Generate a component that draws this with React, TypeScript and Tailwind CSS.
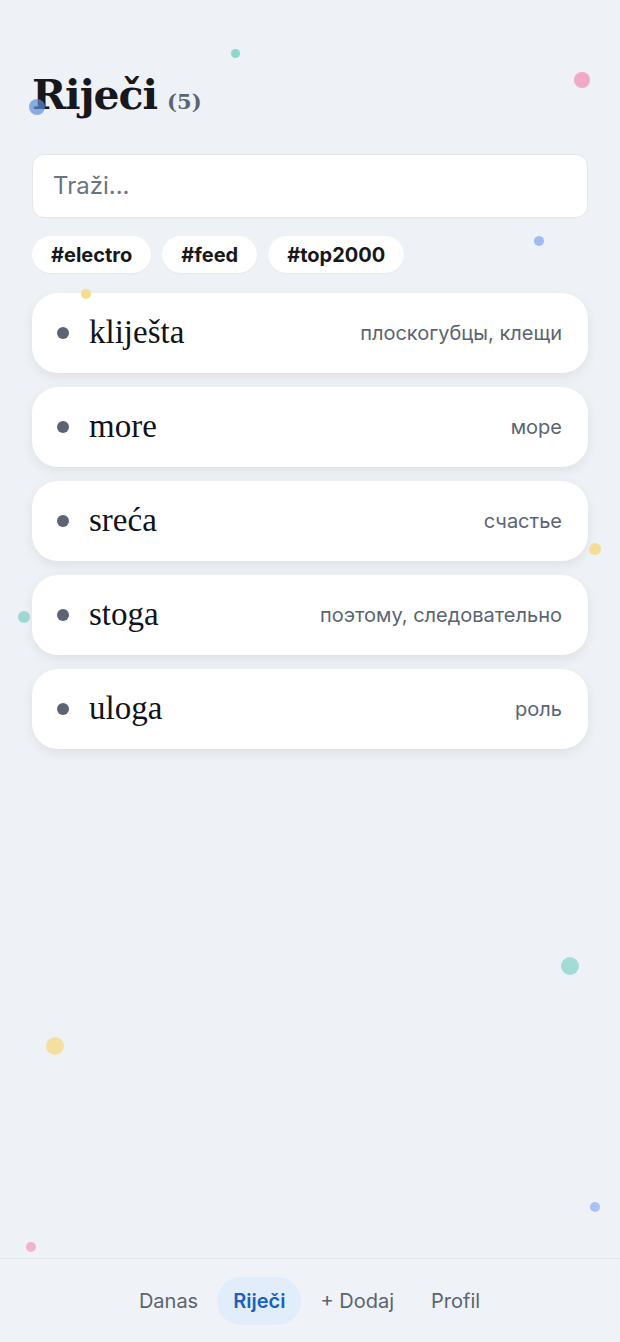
import React from 'react';

const words = [
  { word: 'kliješta', tr: 'плоскогубцы, клещи' },
  { word: 'more', tr: 'море' },
  { word: 'sreća', tr: 'счастье' },
  { word: 'stoga', tr: 'поэтому, следовательно' },
  { word: 'uloga', tr: 'роль' },
];

const tags = ['#electro', '#feed', '#top2000'];

const dots = [
  { cls: 'left-[231px] top-[49px] w-[9px] h-[9px] bg-[#8fd6cc]' },
  { cls: 'left-[574px] top-[72px] w-[16px] h-[16px] bg-[#f2a9c6]' },
  { cls: 'left-[29px] top-[99px] w-[16px] h-[16px] bg-[#5b8fdb]/70' },
  { cls: 'left-[534px] top-[236px] w-[10px] h-[10px] bg-[#9dbcf0]' },
  { cls: 'left-[81px] top-[289px] w-[10px] h-[10px] bg-[#f7dc8e]' },
  { cls: 'left-[589px] top-[543px] w-[12px] h-[12px] bg-[#f6dd95]' },
  { cls: 'left-[18px] top-[611px] w-[12px] h-[12px] bg-[#9fd8d2]' },
  { cls: 'left-[561px] top-[957px] w-[18px] h-[18px] bg-[#a3dcd6]' },
  { cls: 'left-[46px] top-[1037px] w-[18px] h-[18px] bg-[#f5df9e]' },
  { cls: 'left-[590px] top-[1202px] w-[10px] h-[10px] bg-[#a8c1f2]' },
  { cls: 'left-[26px] top-[1242px] w-[10px] h-[10px] bg-[#f4b3cc]' },
];

export default function App() {
  return (
    <div className="relative min-h-[1342px] bg-[#eef1f5] font-['Inter',sans-serif] overflow-hidden">
      <div className="px-8 pt-[70px] pb-[120px]">
        <h1 className="flex items-baseline gap-[10px]">
          <span className="font-['DejaVu_Serif',serif] font-bold text-[41px] leading-[50px] text-[#16181c] tracking-[-1px]">
            Riječi
          </span>
          <span className="font-['DejaVu_Serif',serif] font-bold text-[21px] text-[#5b6472]">(5)</span>
        </h1>

        <div className="mt-[34px] h-[64px] rounded-[12px] bg-white border border-[#e3e6ea] flex items-center px-5">
          <input
            placeholder="Traži..."
            className="w-full bg-transparent outline-none text-[24px] text-[#1f2937] placeholder:text-[#6b7280]"
          />
        </div>

        <div className="mt-[18px] flex gap-[11px]">
          {tags.map((t) => (
            <span
              key={t}
              className="h-[37px] px-[19px] rounded-full bg-white flex items-center text-[20px] font-bold text-[#16181c] shadow-[0_1px_2px_rgba(0,0,0,0.04)]"
            >
              {t}
            </span>
          ))}
        </div>

        <div className="mt-[20px] flex flex-col gap-[14px]">
          {words.map((w) => (
            <div
              key={w.word}
              className="h-[80px] rounded-[26px] bg-white flex items-center pl-[25px] pr-[26px] shadow-[0_4px_12px_rgba(15,23,42,0.07)]"
            >
              <span className="w-[12px] h-[12px] rounded-full bg-[#5b6472]" />
              <span className="ml-[20px] font-['Liberation_Serif',serif] text-[33px] text-[#111318]">{w.word}</span>
              <span className="ml-auto text-[20px] text-[#5b6472]">{w.tr}</span>
            </div>
          ))}
        </div>
      </div>

      <nav className="absolute left-0 right-0 top-[1258px] h-[84px] border-t border-[#e0e3e8] bg-[#eff2f6] flex items-center justify-center gap-[2px]">
        <span className="px-[17px] h-[48px] flex items-center rounded-full text-[20px] text-[#5b6472]">Danas</span>
        <span className="px-[16px] h-[48px] flex items-center rounded-full text-[20px] font-semibold text-[#1d5fbf] bg-[#e1edfb]">
          Riječi
        </span>
        <span className="px-[17px] h-[48px] flex items-center rounded-full text-[20px] text-[#5b6472]">+ Dodaj</span>
        <span className="px-[18px] h-[48px] flex items-center rounded-full text-[20px] text-[#5b6472]">Profil</span>
      </nav>

      {dots.map((d, i) => (
        <span key={i} className={`pointer-events-none absolute rounded-full ${d.cls}`} />
      ))}
    </div>
  );
}
